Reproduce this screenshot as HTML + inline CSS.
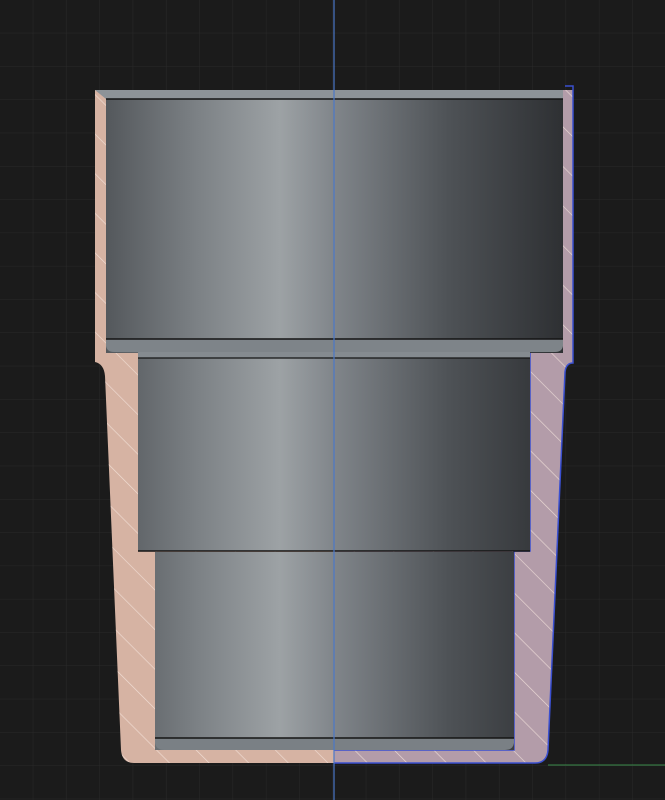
<!DOCTYPE html>
<html><head><style>html,body{margin:0;padding:0;background:#1b1b1b;}svg{display:block}</style></head>
<body>
<svg width="665" height="800" viewBox="0 0 665 800" xmlns="http://www.w3.org/2000/svg">
<defs>
<pattern id="grid" width="33.3" height="33.3" patternUnits="userSpaceOnUse" x="0" y="0">
<path d="M33.3 0V33.3M0 33.3H33.3" stroke="#292929" stroke-width="1" fill="none"/>
</pattern>
<pattern id="hatch" width="28" height="28" patternUnits="userSpaceOnUse" patternTransform="rotate(-45)">
<line x1="0" y1="0" x2="0" y2="28" stroke="#f4e4dc" stroke-width="1.3"/>
</pattern>
<linearGradient id="cyl" gradientUnits="userSpaceOnUse" x1="106" y1="0" x2="563" y2="0">
<stop offset="0" stop-color="#54585c"/>
<stop offset="0.2" stop-color="#7c8185"/>
<stop offset="0.38" stop-color="#9da2a5"/>
<stop offset="0.5" stop-color="#80858a"/>
<stop offset="0.75" stop-color="#4e5256"/>
<stop offset="1" stop-color="#2e3033"/>
</linearGradient>
<clipPath id="right"><rect x="334" y="0" width="340" height="800"/></clipPath>
<path id="outer" d="M95 90 L573 90 L573 363 Q566 363 565 372 L548 750 Q547 763 535 763 L134 763 Q122 763 121 750 L105 376 Q104 364 95 362 Z"/>
</defs>
<rect width="665" height="800" fill="#1b1b1b"/>
<rect width="665" height="800" fill="url(#grid)"/>
<use href="#outer" fill="#d6b3a3"/>
<use href="#outer" fill="#b39ca9" clip-path="url(#right)"/>
<use href="#outer" fill="url(#hatch)" opacity="0.85"/>
<path d="M334 763 L535 763 Q547 763 548 750 L565 372 Q566 363 573 363 L573 86 L565 86" fill="none" stroke="#3a4fd0" stroke-width="1.5"/>
<path d="M334 750 L514 750 L514 551 L530 551 L530 352" fill="none" stroke="#3a4fd0" stroke-width="1.5"/>
<rect x="106" y="91" width="457" height="262" fill="url(#cyl)"/>
<path d="M95 90 L563 90 L563 99 L106 99 Z" fill="#8d9398"/>
<line x1="106" y1="99" x2="563" y2="99" stroke="#151515" stroke-width="1.5"/>
<path d="M106 339 L563 339 L563 346 Q562 352 555 352 L114 352 Q107 352 106 346 Z" fill="#7e8489"/>
<line x1="106" y1="339" x2="563" y2="339" stroke="#151515" stroke-width="1.5"/>
<rect x="138" y="352" width="392" height="199" fill="url(#cyl)"/>
<rect x="138" y="352" width="392" height="6" fill="#858b90"/>
<line x1="138" y1="358" x2="530" y2="358" stroke="#151515" stroke-width="1.2"/>
<line x1="138" y1="551" x2="530" y2="551" stroke="#151515" stroke-width="1.5"/>
<rect x="155" y="552" width="359" height="198" fill="url(#cyl)"/>
<path d="M155 738 L514 738 L514 743 Q513 750 505 750 L165 750 Q156 750 155 743 Z" fill="#7a8085"/>
<line x1="155" y1="738" x2="514" y2="738" stroke="#151515" stroke-width="1.5"/>
<line x1="334" y1="0" x2="334" y2="800" stroke="#4a78c8" stroke-width="1.2"/>
<line x1="548" y1="765" x2="665" y2="765" stroke="#3a8a4a" stroke-width="1"/>
</svg>
</body></html>
